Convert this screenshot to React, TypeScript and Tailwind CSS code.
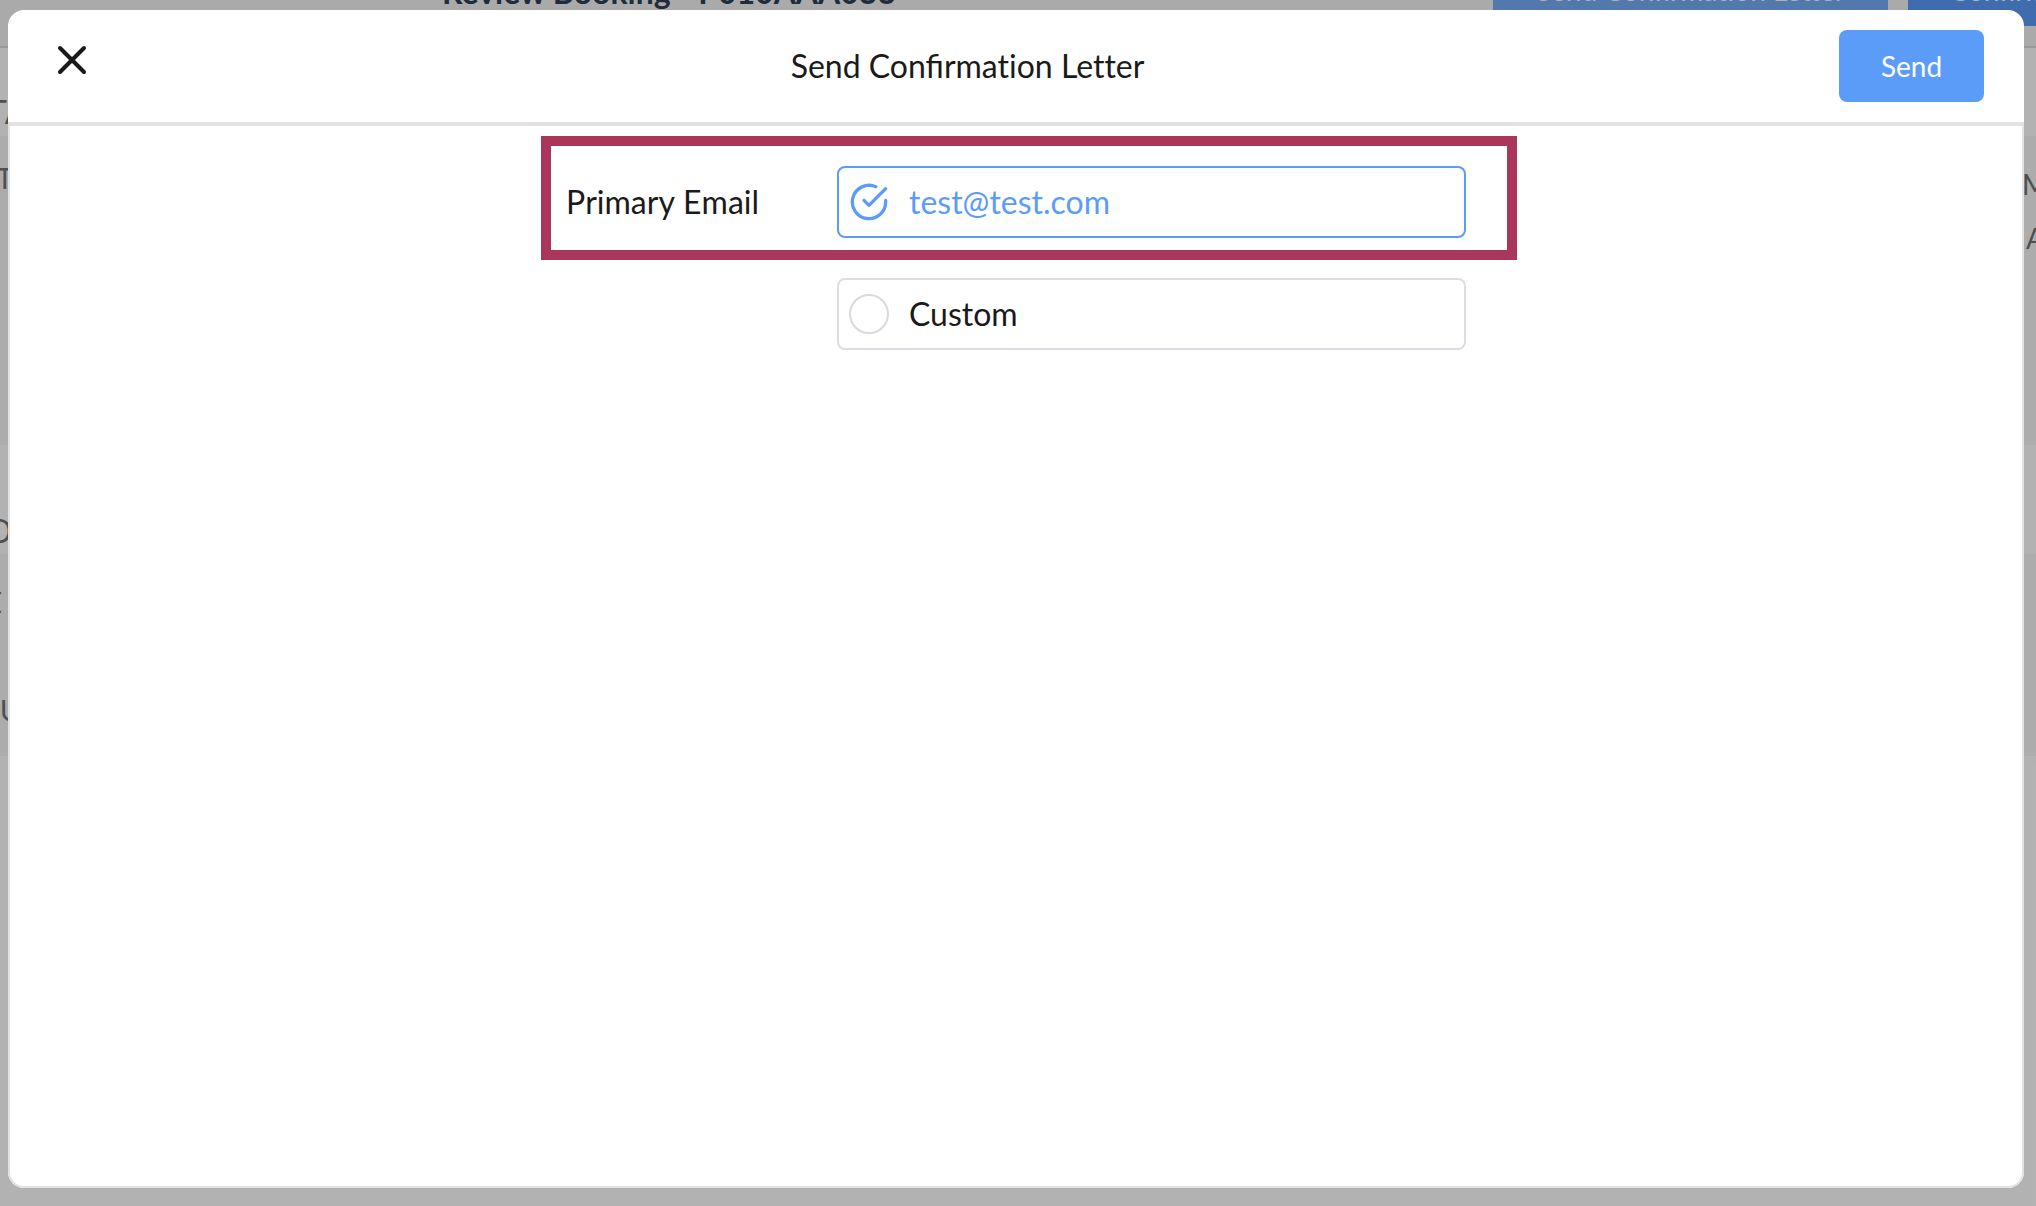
import React from "react";
import { FiCheckCircle, FiX } from "react-icons/fi";

// Booking page that stays visible around the dialog
const BookingPage = () => {
  return (
    <div className="absolute inset-0 overflow-hidden bg-white text-[#727272]" aria-hidden="true">
      <div className="h-12 bg-[#f4f4f4] border-b-2 border-[#dedede] flex justify-between items-start">
        <h1 className="-mt-7 ml-[442px] text-[32px] leading-10 font-bold text-[#2f3e57]">
          Review Booking - P010AAA033
        </h1>
        <div className="-mt-[46px] -mr-[54px] flex gap-5 text-[28px] text-white">
          <button tabIndex={-1} className="h-18 w-[395px] bg-[#78acf7]">Send Confirmation Letter</button>
          <button tabIndex={-1} className="h-18 w-[182px] bg-[#5a9bfb]">Confirm</button>
        </div>
      </div>
      <div className="h-22 -ml-3 pt-12 text-[32px] leading-8">TA</div>
      <div className="h-[309px] bg-[#f7f7f7] flex justify-between items-start text-[28px] leading-8">
        <p className="-ml-5 pt-[26px]">TT</p>
        <div className="w-[14px] pt-8">
          <p>M</p>
          <p className="mt-[22px] ml-1">A</p>
        </div>
      </div>
      <div className="h-[109px] -ml-3 pt-[70px] text-[32px] leading-8">D</div>
      <div className="h-[202px] bg-[#f7f7f7] text-[28px] leading-8">
        <p className="-ml-[14px] pt-8">E</p>
        <p className="pt-[76px]">U</p>
      </div>
    </div>
  );
};

const options = [
  { id: "primary", label: "Primary Email", text: "test@test.com" },
  { id: "custom", label: "", text: "Custom" },
];

const App = () => {
  const [selected, setSelected] = React.useState("primary");

  return (
    <div className="relative h-screen overflow-hidden font-['Lato',sans-serif]">
      <BookingPage />
      <div className="absolute inset-0 flex bg-black/30 pt-[10px] pr-3 pb-[18px] pl-2">
        <div
          role="dialog"
          aria-labelledby="dialog-title"
          className="w-full flex flex-col rounded-2xl bg-white overflow-hidden text-[#1a1a1a]"
        >
          <header className="flex items-center justify-between px-10 py-5 border-b-4 border-[#e2e2e2]">
            <button aria-label="Close" className="pb-3">
              <FiX size={48} />
            </button>
            <h2 id="dialog-title" className="text-[32px] leading-10">
              Send Confirm<span className="[font-variant-ligatures:none]">ation Letter</span>
            </h2>
            <button className="h-18 w-[145px] rounded-lg bg-[#5c9cf9] text-[28px] text-white">Send</button>
          </header>

          <div className="flex-1 border-2 border-t-0 border-[#e2e2e2] rounded-b-2xl pt-[10px] pl-[26px]">
            <div className="max-w-[976px] mx-auto flex flex-col gap-2">
              {options.map((option) => {
                const checked = option.id === selected;
                return (
                  <div
                    key={option.id}
                    className={
                      option.id === "primary"
                        ? "flex items-center border-10 border-[#a9375b] pl-[15px] pr-[41px] pt-5 pb-3"
                        : "flex items-center border-x-10 border-transparent pl-[15px] pr-[41px] pt-[10px]"
                    }
                  >
                    <span className="w-[271px] text-[32px] leading-10 [font-kerning:none]">{option.label}</span>
                    <label
                      className={
                        checked
                          ? "relative flex-1 h-18 flex items-center gap-5 pl-[10px] border-2 rounded-lg border-[#5c9cf9] text-[#5c9cf9]"
                          : "relative flex-1 h-18 flex items-center gap-5 pl-[10px] border-2 rounded-lg border-[#dddde3]"
                      }
                    >
                      <input
                        type="radio"
                        name="recipient"
                        className="sr-only"
                        checked={checked}
                        onChange={() => setSelected(option.id)}
                      />
                      {checked ? (
                        <FiCheckCircle size={40} />
                      ) : (
                        <span className="size-10 rounded-full border-2 border-[#dadada]" />
                      )}
                      <span className="text-[32px] leading-10">{option.text}</span>
                    </label>
                  </div>
                );
              })}
            </div>
          </div>
        </div>
      </div>
    </div>
  );
};

export default App;
